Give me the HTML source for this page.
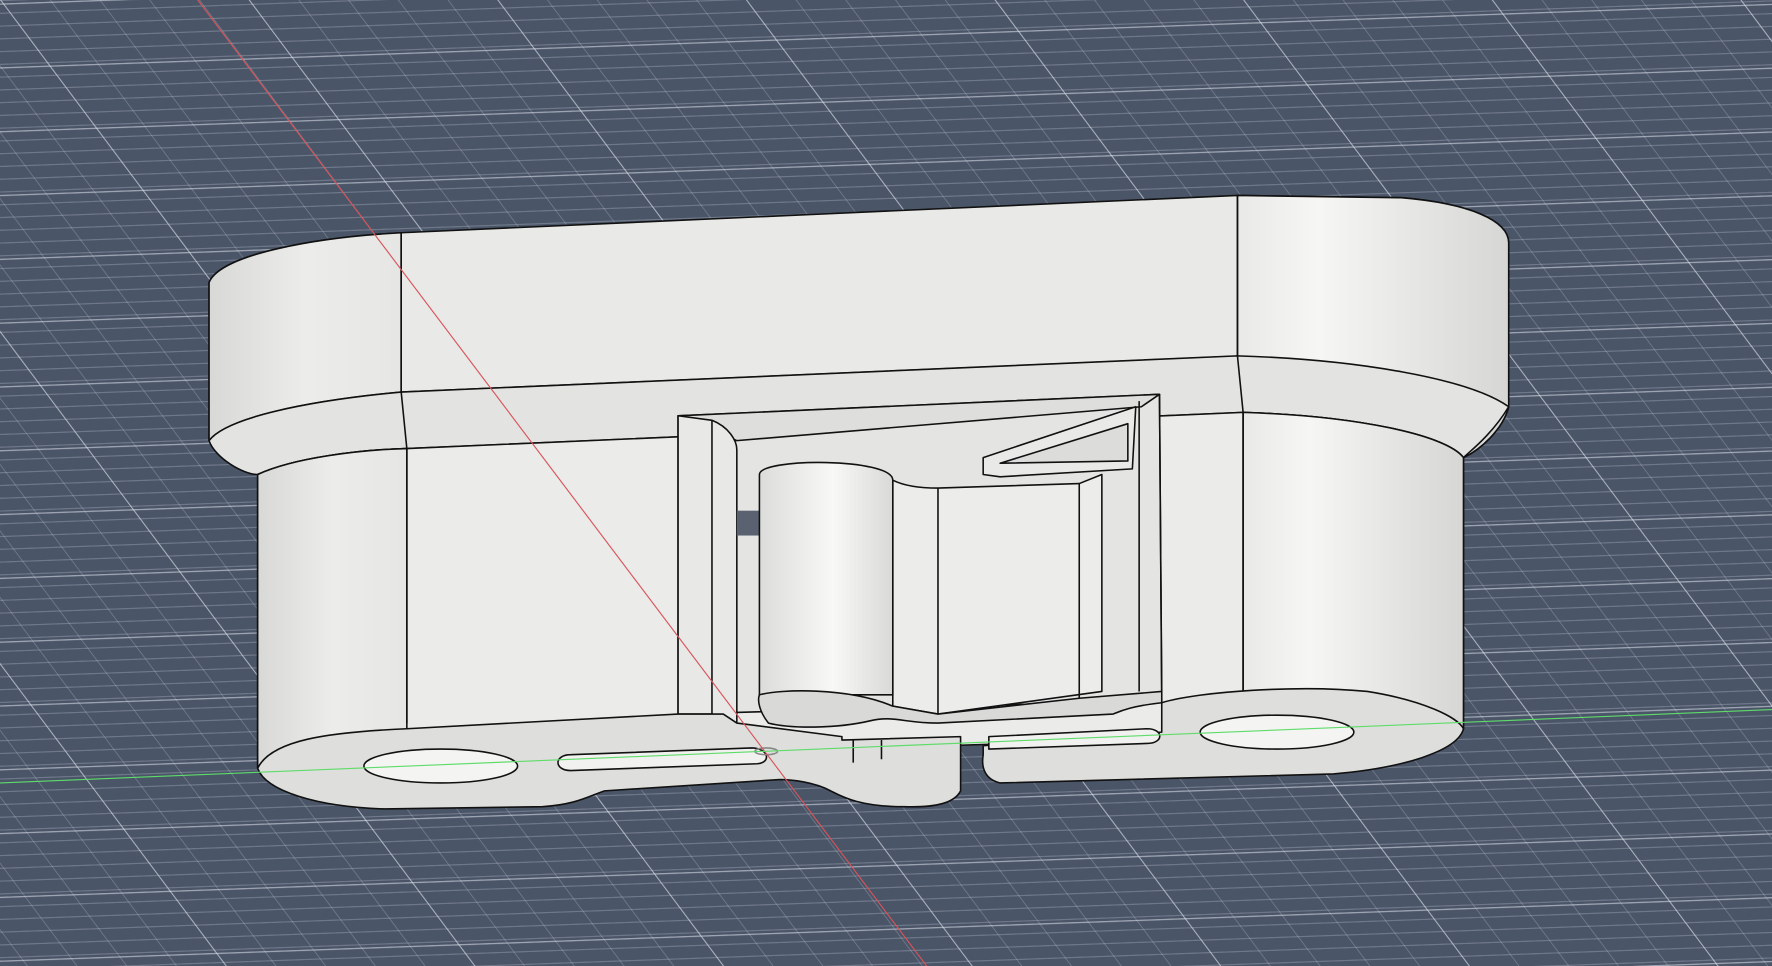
<!DOCTYPE html>
<html><head><meta charset="utf-8"><style>
html,body{margin:0;padding:0;background:#4a5568;overflow:hidden}
svg{display:block}
</style></head><body>
<svg width="1772" height="966" viewBox="0 0 1568 855" preserveAspectRatio="none" xmlns="http://www.w3.org/2000/svg">
<defs>
<pattern id="gm" patternUnits="userSpaceOnUse" width="44" height="11" patternTransform="skewX(36.8) skewY(-2)">
<line x1="0" y1="0.5" x2="44" y2="0.5" stroke="rgba(205,212,222,0.28)" stroke-width="1"/>
<line x1="0.5" y1="0" x2="0.5" y2="11" stroke="rgba(205,212,222,0.28)" stroke-width="1"/>
</pattern>
<pattern id="gM" patternUnits="userSpaceOnUse" width="220" height="55" patternTransform="skewX(36.8) skewY(-2) translate(0,3)">
<line x1="0" y1="0.5" x2="220" y2="0.5" stroke="rgba(225,230,236,0.55)" stroke-width="1.3"/>
<line x1="0.5" y1="0" x2="0.5" y2="55" stroke="rgba(225,230,236,0.55)" stroke-width="1.3"/>
</pattern>
<linearGradient id="lend" x1="0" x2="1" y1="0" y2="0">
<stop offset="0" stop-color="#d8d8d6"/><stop offset="0.5" stop-color="#ececea"/><stop offset="1" stop-color="#e6e6e4"/>
</linearGradient>
<linearGradient id="rend" x1="0" x2="1" y1="0" y2="0">
<stop offset="0" stop-color="#e9e9e7"/><stop offset="0.3" stop-color="#f6f6f4"/><stop offset="1" stop-color="#d6d6d4"/>
</linearGradient>
<linearGradient id="cyl" x1="0" x2="1" y1="0" y2="0">
<stop offset="0" stop-color="#dcdcda"/><stop offset="0.55" stop-color="#f8f8f6"/><stop offset="1" stop-color="#d9d9d7"/>
</linearGradient>
</defs>
<rect width="1568" height="855" fill="#4a5568"/>
<rect width="1568" height="855" fill="url(#gm)"/>
<rect width="1568" height="855" fill="url(#gM)"/>
<g stroke="#111" stroke-width="1.4" stroke-linejoin="round">
<path d="M185,250 C195,225 280,210 355,206 L1095,173 L1240,175 C1300,180 1335,195 1335,215 L1335,360 C1330,380 1310,398 1295,405 L1100,365 L1100,315 L355,347 C270,355 200,370 185,390 Z" fill="#e9e9e7"/>
<path d="M185,250 C195,225 280,210 355,206 L355,347 C270,355 200,370 185,390 Z" fill="url(#lend)"/>
<path d="M1095,173 L1240,175 C1300,180 1335,195 1335,215 L1335,360 C1330,380 1310,398 1295,405 L1100,365 L1095,315 Z" fill="url(#rend)"/>
<path d="M185,390 C200,370 270,355 355,347 L1095,315 C1200,318 1300,335 1335,360 C1320,385 1300,400 1295,405 C1280,385 1200,368 1100,365 L360,397 C320,398 260,405 228,420 C215,420 190,405 185,390 Z" fill="#e3e3e1"/>
<path d="M228,420 C260,405 320,398 360,397 L1100,365 C1200,368 1280,385 1295,405 L1295,645 L228,680 Z" fill="#ebebe9"/>
<path d="M228,420 C260,405 320,398 360,397 L360,670 L228,680 Z" fill="url(#lend)"/>
<path d="M1100,365 C1200,368 1280,385 1295,405 L1295,645 L1100,612 Z" fill="url(#rend)"/>
<line x1="355" y1="206" x2="355" y2="347" />
<line x1="355" y1="347" x2="360" y2="397" />
<line x1="360" y1="397" x2="360" y2="640" />
<line x1="1095" y1="173" x2="1095" y2="315" />
<line x1="1095" y1="315" x2="1100" y2="365" />
<line x1="1100" y1="365" x2="1100" y2="612" />
<path d="M600,368 L1026,349 L1028,620 L600,632 Z" fill="#e4e4e2"/>
<path d="M600,368 L1026,349 L1010,360 L652,390 Z" fill="#dededc"/>
<path d="M600,368 L630,372 C645,378 652,390 652,398 L652,640 L630,632 L600,632 Z" fill="#e8e8e6"/>
<line x1="630" y1="372" x2="630" y2="632"/>
<rect x="652" y="452" width="20" height="22" fill="#5a6272" stroke="none"/>
<line x1="1008" y1="355" x2="1008" y2="612"/>
<line x1="1026" y1="349" x2="1028" y2="612"/>
<path d="M870,405 L1005,360 L1002,415 L885,422 L870,420 Z" fill="#e9e9e7"/>
<path d="M885,410 L998,375 L998,408 Z" fill="#dcdcda"/>
<path d="M790,425 C800,430 815,432 830,432 L955,428 L975,420 L975,612 L830,632 L790,625 Z" fill="#ececea"/>
<line x1="830" y1="432" x2="830" y2="632"/>
<line x1="955" y1="428" x2="955" y2="618"/>
<path d="M672,420 C672,405 790,405 790,425 L790,615 L672,615 Z" fill="url(#cyl)"/>
<path d="M228,680 C240,655 290,648 360,645 L600,632 L640,632 L652,640 L745,652 L745,655 L850,652 L850,700 C845,710 830,715 800,714 C760,714 745,705 735,700 C720,692 700,690 690,690 L535,700 C520,705 510,712 480,714 L340,716 C280,714 235,700 228,680 Z" fill="#dededc"/>
<path d="M870,660 L1028,648 L1028,622 C1060,612 1150,606 1210,612 C1260,620 1290,635 1295,645 C1290,665 1240,680 1180,685 L885,693 C872,690 868,680 870,668 Z" fill="#dededc"/>
<path d="M672,615 C690,610 750,608 790,625 L830,632 L955,618 L1028,612 L1028,622 C1000,625 990,630 985,632 L830,640 C800,640 790,633 770,638 C740,645 700,645 680,640 C672,630 670,620 672,615 Z" fill="#d9d9d7"/>
<ellipse cx="390" cy="678" rx="68" ry="15" fill="#f4f4f2"/>
<ellipse cx="1130" cy="648" rx="68" ry="15" fill="#f4f4f2"/>
<path d="M505,668 L665,662 C680,662 683,675 670,676 L505,682 C490,682 490,668 505,668 Z" fill="#f1f1ef"/>
<path d="M875,652 L1015,645 C1030,645 1030,658 1015,658 L875,663 Z" fill="#f1f1ef"/>
<ellipse cx="678" cy="665" rx="10" ry="3" fill="none" stroke="#888"/>
<line x1="755" y1="655" x2="755" y2="675"/>
<line x1="780" y1="655" x2="780" y2="672"/>
</g>
<line x1="175" y1="0" x2="820" y2="855" stroke="#d8545a" stroke-width="1"/>
<line x1="0" y1="693" x2="1568" y2="628" stroke="#5fdc6a" stroke-width="1"/>
</svg>
</body></html>
